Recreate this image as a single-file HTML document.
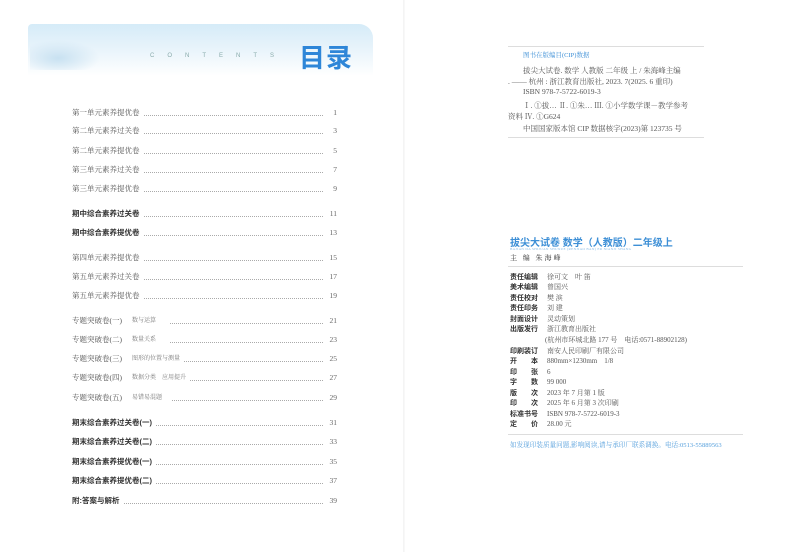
<!DOCTYPE html>
<html><head><meta charset="utf-8"><style>
*{margin:0;padding:0;box-sizing:border-box}
body{width:800px;height:552px;background:#fff;position:relative;overflow:hidden;font-family:"Liberation Serif","Noto Serif CJK SC",serif;color:#555}
.a{position:absolute;white-space:nowrap}
.row{position:absolute;left:72px;width:265px;height:10px;font-size:7.5px;line-height:10px;display:flex;align-items:center}
.row .d{flex:1;border-bottom:1px dotted #aaa;margin:0 4px;height:5px}
.row .n{width:10px;text-align:right;color:#666}
.b{font-family:"Liberation Sans","Noto Sans CJK SC",sans-serif;font-weight:bold;color:#333}
.sub{font-size:6px;color:#777;margin-left:10px}
.r{position:absolute;left:510px;font-size:7px;line-height:10px;color:#555}
.r b{font-family:"Liberation Sans","Noto Sans CJK SC",sans-serif;color:#333;display:inline-block;width:37px}
.c{font-size:7.5px}
</style></head><body>
<div class="a" style="left:403px;top:0;width:2px;height:552px;background:linear-gradient(90deg,#f2f2f2,#fafafa)"></div>
<div class="a" style="left:28px;top:24px;width:345px;height:52px;border-radius:4px 14px 0 0;background:linear-gradient(180deg,#d5ebf8 0%,#e9f4fb 50%,#fff 100%)"></div>
<div class="a" style="left:30px;top:40px;width:70px;height:30px;background:radial-gradient(ellipse at 40% 60%,#c8e1f1 0%,rgba(255,255,255,0) 70%)"></div>
<div class="a" style="left:150px;top:53px;font-size:6px;letter-spacing:13px;color:#8aa;font-family:'Liberation Sans',sans-serif">CONTENTS</div>
<div class="a" style="left:299px;top:38px;font-size:26px;font-weight:bold;color:#2e86d8;font-family:'Liberation Sans','Noto Sans CJK SC',sans-serif;letter-spacing:1px">目录</div>

<div class="row" style="top:108px"><span>第一单元素养提优卷</span><span class="d"></span><span class="n">1</span></div>
<div class="row" style="top:126px"><span>第二单元素养过关卷</span><span class="d"></span><span class="n">3</span></div>
<div class="row" style="top:146px"><span>第二单元素养提优卷</span><span class="d"></span><span class="n">5</span></div>
<div class="row" style="top:165px"><span>第三单元素养过关卷</span><span class="d"></span><span class="n">7</span></div>
<div class="row" style="top:184px"><span>第三单元素养提优卷</span><span class="d"></span><span class="n">9</span></div>
<div class="row" style="top:209px"><span class="b">期中综合素养过关卷</span><span class="d"></span><span class="n">11</span></div>
<div class="row" style="top:228px"><span class="b">期中综合素养提优卷</span><span class="d"></span><span class="n">13</span></div>
<div class="row" style="top:253px"><span>第四单元素养提优卷</span><span class="d"></span><span class="n">15</span></div>
<div class="row" style="top:272px"><span>第五单元素养过关卷</span><span class="d"></span><span class="n">17</span></div>
<div class="row" style="top:291px"><span>第五单元素养提优卷</span><span class="d"></span><span class="n">19</span></div>
<div class="row" style="top:316px"><span>专题突破卷(一)</span><span class="sub">数与运算</span><span class="d" style="margin-left:14px"></span><span class="n">21</span></div>
<div class="row" style="top:335px"><span>专题突破卷(二)</span><span class="sub">数量关系</span><span class="d" style="margin-left:14px"></span><span class="n">23</span></div>
<div class="row" style="top:354px"><span>专题突破卷(三)</span><span class="sub">图形的位置与测量</span><span class="d"></span><span class="n">25</span></div>
<div class="row" style="top:373px"><span>专题突破卷(四)</span><span class="sub">数据分类　应用提升</span><span class="d"></span><span class="n">27</span></div>
<div class="row" style="top:393px"><span>专题突破卷(五)</span><span class="sub">易错易混题</span><span class="d" style="margin-left:10px"></span><span class="n">29</span></div>
<div class="row" style="top:418px"><span class="b">期末综合素养过关卷(一)</span><span class="d"></span><span class="n">31</span></div>
<div class="row" style="top:437px"><span class="b">期末综合素养过关卷(二)</span><span class="d"></span><span class="n">33</span></div>
<div class="row" style="top:457px"><span class="b">期末综合素养提优卷(一)</span><span class="d"></span><span class="n">35</span></div>
<div class="row" style="top:476px"><span class="b">期末综合素养提优卷(二)</span><span class="d"></span><span class="n">37</span></div>
<div class="row" style="top:496px"><span class="b">附:答案与解析</span><span class="d"></span><span class="n">39</span></div>

<div class="a" style="left:508px;top:46px;width:196px;border-top:1px solid #ddd"></div>
<div class="a" style="left:523px;top:50px;font-size:6.5px;color:#3d8fd6">图书在版编目(CIP)数据</div>
<div class="a c" style="left:523px;top:65px">拔尖大试卷. 数学 人教版 二年级 上 / 朱海峰主编</div>
<div class="a c" style="left:508px;top:76px">. —— 杭州 : 浙江教育出版社, 2023. 7(2025. 6 重印)</div>
<div class="a c" style="left:523px;top:87px">ISBN 978-7-5722-6019-3</div>
<div class="a c" style="left:523px;top:100px">Ⅰ. ①拔… Ⅱ. ①朱… Ⅲ. ①小学数学课－教学参考</div>
<div class="a c" style="left:508px;top:111px">资料 Ⅳ. ①G624</div>
<div class="a c" style="left:523px;top:123px">中国国家版本馆 CIP 数据核字(2023)第 123735 号</div>
<div class="a" style="left:508px;top:137px;width:196px;border-top:1px solid #ddd"></div>

<div class="a" style="left:510px;top:234px;font-size:10px;font-weight:bold;color:#3d8fd6;font-family:'Liberation Sans','Noto Sans CJK SC',sans-serif">拔尖大试卷 数学（人教版）二年级上</div>
<div class="a" style="left:510px;top:247px;font-size:3.5px;color:#8bbbe3;letter-spacing:.3px">BAJIAN DA SHIJUAN SHUXUE (RENJIAO BAN) ER NIANJI SHANG</div>
<div class="a" style="left:510px;top:253px;font-size:7px;color:#333;letter-spacing:2px">主 编 朱海峰</div>
<div class="a" style="left:508px;top:266px;width:235px;border-top:1px solid #ddd"></div>
<div class="r" style="top:272px"><b>责任编辑</b>徐可文　叶 笛</div>
<div class="r" style="top:282px"><b>美术编辑</b>曾国兴</div>
<div class="r" style="top:293px"><b>责任校对</b>樊 滨</div>
<div class="r" style="top:303px"><b>责任印务</b>刘 建</div>
<div class="r" style="top:314px"><b>封面设计</b>灵动策划</div>
<div class="r" style="top:324px"><b>出版发行</b>浙江教育出版社</div>
<div class="r" style="top:335px;left:545px">(杭州市环城北路 177 号　电话:0571-88902128)</div>
<div class="r" style="top:346px"><b>印刷装订</b>南安人民印刷厂有限公司</div>
<div class="r" style="top:356px"><b>开　　本</b>880mm×1230mm　1/8</div>
<div class="r" style="top:367px"><b>印　　张</b>6</div>
<div class="r" style="top:377px"><b>字　　数</b>99 000</div>
<div class="r" style="top:388px"><b>版　　次</b>2023 年 7 月第 1 版</div>
<div class="r" style="top:398px"><b>印　　次</b>2025 年 6 月第 3 次印刷</div>
<div class="r" style="top:409px"><b>标准书号</b>ISBN 978-7-5722-6019-3</div>
<div class="r" style="top:419px"><b>定　　价</b>28.00 元</div>
<div class="a" style="left:508px;top:434px;width:235px;border-top:1px solid #ddd"></div>
<div class="a" style="left:510px;top:439px;font-size:6.6px;color:#5aa2dd">如发现印装质量问题,影响阅读,请与承印厂联系调换。电话:0513-55889563</div>
</body></html>
